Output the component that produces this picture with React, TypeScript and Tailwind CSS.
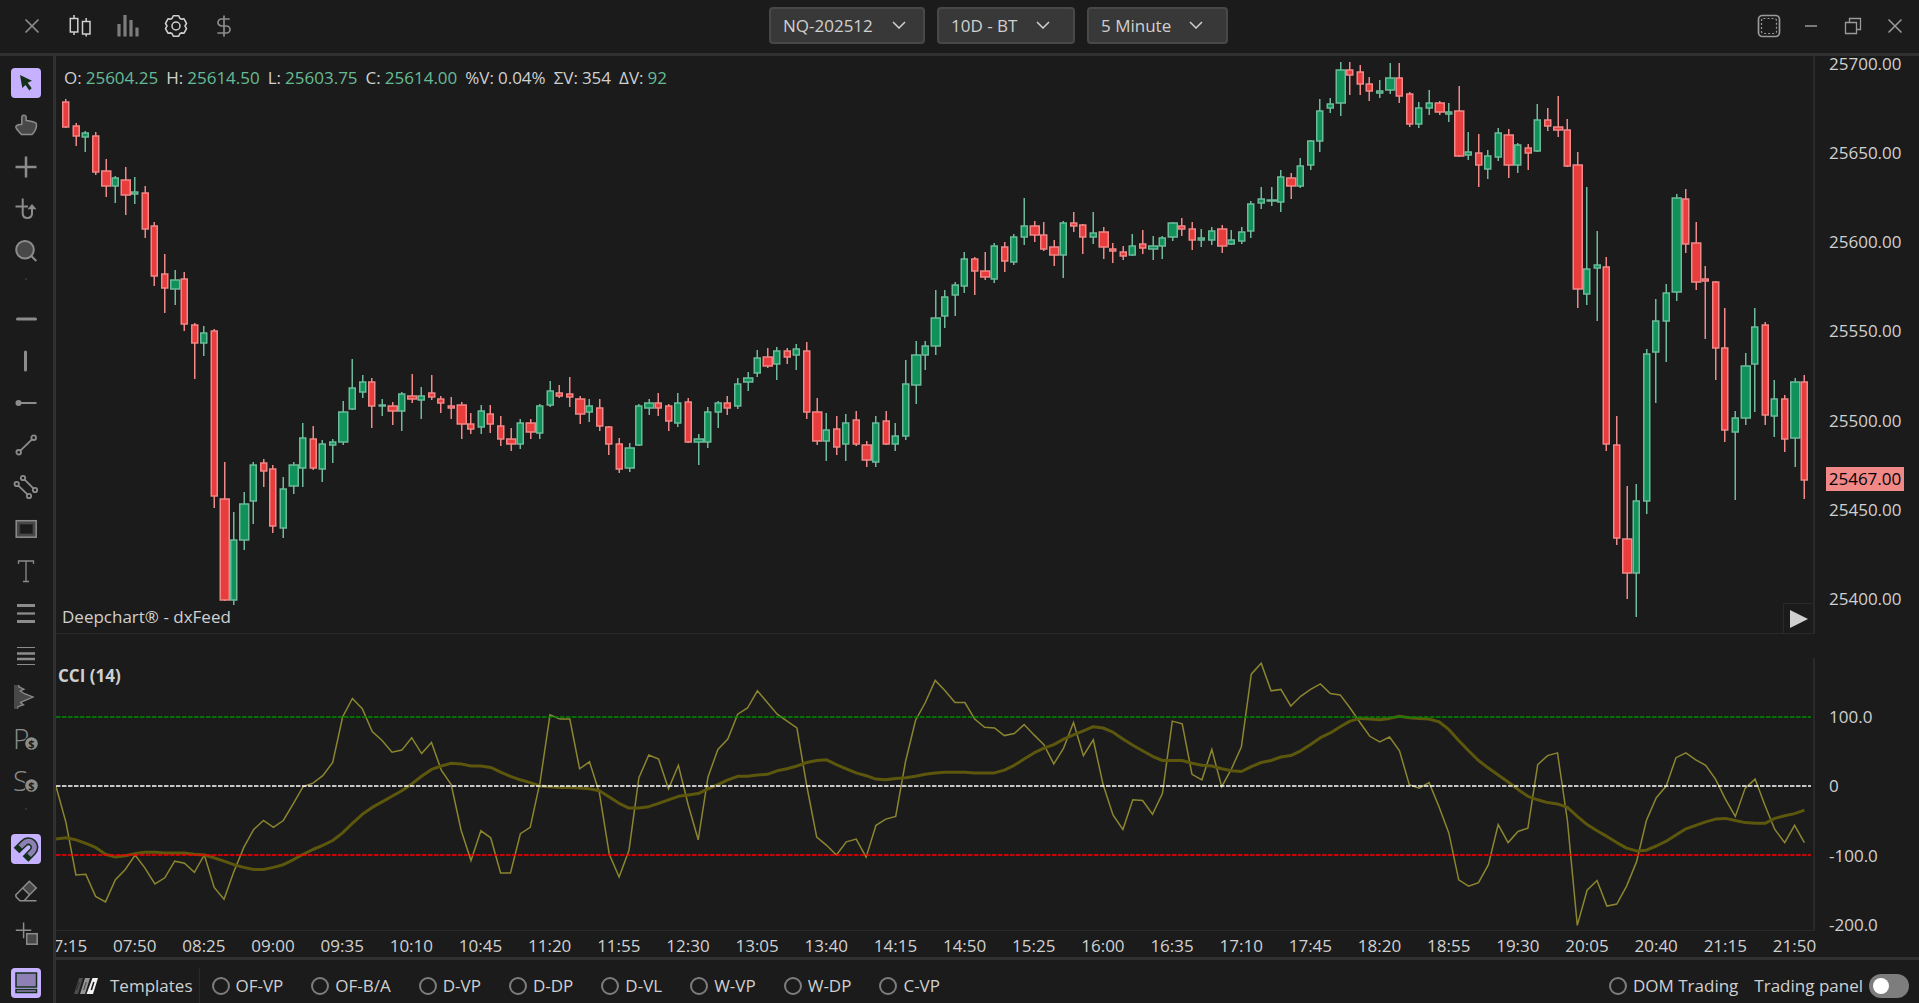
import type { ReactNode } from 'react'
import clsx from 'clsx'
import { DollarSign } from 'lucide-react'

// 1 = up, 0 = down, followed by high, body top, body bottom and low inside the price pane
type Candle = [number, number, number, number, number]

const CANDLES: Candle[] = [
  [0, 43, 45, 72, 72], [0, 67, 69, 81, 90], [1, 75, 76, 82, 96], [0, 76, 79, 117, 119], [0, 103, 114, 131, 141],
  [1, 120, 121, 131, 147], [0, 111, 123, 140, 159], [1, 121, 135, 139, 148], [0, 130, 136, 174, 182], [0, 166, 169, 221, 230],
  [0, 198, 217, 233, 257], [1, 214, 223, 234, 249], [0, 216, 222, 269, 275], [0, 267, 268, 288, 323], [1, 270, 276, 288, 300],
  [0, 273, 274, 441, 452], [0, 406, 442, 545, 545], [1, 456, 483, 545, 549], [1, 436, 447, 485, 494], [1, 406, 408, 446, 468],
  [0, 403, 406, 416, 431], [0, 409, 412, 471, 477], [1, 421, 432, 473, 482], [1, 406, 408, 431, 438], [1, 367, 381, 413, 431],
  [0, 370, 382, 413, 414], [1, 384, 387, 414, 426], [1, 383, 385, 390, 407], [1, 345, 355, 387, 389], [1, 303, 331, 354, 354],
  [1, 319, 325, 337, 342], [0, 322, 325, 351, 372], [1, 343, 348, 351, 360], [0, 346, 349, 356, 369], [1, 336, 337, 356, 375],
  [0, 318, 339, 344, 347], [1, 331, 339, 345, 363], [0, 319, 336, 342, 344], [0, 340, 342, 348, 357], [0, 341, 349, 353, 363],
  [0, 346, 348, 369, 383], [0, 357, 367, 374, 378], [1, 349, 354, 372, 378], [0, 349, 357, 369, 377], [0, 360, 369, 384, 390],
  [0, 372, 382, 389, 395], [1, 363, 366, 389, 393], [0, 363, 366, 377, 383], [1, 348, 349, 378, 383], [1, 325, 334, 350, 351],
  [0, 329, 336, 341, 342], [0, 321, 337, 342, 351], [0, 340, 342, 359, 368], [1, 343, 349, 357, 366], [0, 343, 351, 371, 375],
  [0, 370, 370, 389, 399], [0, 382, 387, 414, 417], [1, 387, 391, 413, 416], [1, 348, 349, 390, 390], [1, 343, 346, 353, 359],
  [0, 337, 346, 353, 360], [0, 348, 349, 366, 375], [1, 337, 346, 368, 371], [0, 342, 345, 387, 387], [1, 378, 382, 387, 409],
  [1, 351, 355, 387, 392], [1, 345, 346, 357, 372], [0, 340, 346, 353, 359], [1, 322, 327, 351, 353], [1, 316, 321, 327, 335],
  [1, 294, 301, 318, 321], [0, 292, 300, 311, 312], [1, 291, 294, 309, 324], [0, 292, 294, 302, 308], [1, 288, 292, 300, 314],
  [0, 286, 294, 357, 363], [0, 342, 355, 386, 389], [1, 357, 373, 386, 405], [0, 360, 372, 392, 399], [1, 358, 366, 389, 405],
  [0, 355, 363, 389, 390], [0, 385, 388, 405, 411], [1, 360, 366, 407, 411], [0, 355, 364, 389, 389], [1, 367, 379, 389, 395],
  [1, 304, 327, 381, 384], [1, 285, 298, 330, 348], [1, 285, 289, 300, 314], [1, 234, 261, 291, 299], [1, 234, 240, 261, 272],
  [1, 226, 228, 240, 260], [1, 196, 202, 231, 237], [0, 201, 202, 216, 239], [0, 196, 214, 222, 224], [1, 187, 189, 224, 227],
  [0, 186, 190, 206, 216], [1, 178, 180, 207, 209], [1, 142, 169, 182, 189], [0, 165, 169, 180, 186], [0, 166, 178, 194, 195],
  [0, 184, 190, 200, 210], [1, 165, 166, 200, 222], [0, 156, 166, 171, 176], [0, 168, 168, 182, 198], [1, 156, 176, 182, 188],
  [0, 171, 175, 192, 203], [0, 187, 192, 196, 207], [0, 190, 195, 201, 204], [1, 178, 189, 200, 200], [0, 174, 187, 193, 198],
  [1, 180, 189, 194, 204], [1, 180, 181, 191, 203], [1, 166, 166, 182, 185], [0, 162, 169, 174, 180], [0, 166, 172, 185, 194],
  [1, 173, 181, 185, 191], [1, 171, 174, 185, 189], [0, 169, 172, 191, 197], [1, 174, 183, 189, 189], [1, 171, 175, 186, 188],
  [1, 145, 147, 176, 182], [1, 131, 142, 148, 153], [1, 131, 143, 146, 150], [1, 114, 120, 147, 156], [0, 117, 121, 131, 143],
  [1, 102, 109, 131, 132], [1, 84, 84, 110, 114], [1, 43, 54, 86, 96], [1, 42, 47, 53, 57], [1, 6, 13, 48, 60],
  [0, 6, 13, 20, 39], [0, 9, 15, 29, 39], [0, 21, 27, 36, 45], [1, 24, 34, 38, 42], [1, 7, 21, 35, 38],
  [0, 7, 21, 41, 47], [0, 36, 37, 69, 71], [1, 46, 51, 69, 72], [1, 34, 46, 53, 59], [0, 45, 46, 57, 59],
  [1, 47, 55, 59, 66], [0, 30, 54, 101, 101], [1, 76, 95, 100, 104], [0, 78, 96, 110, 131], [1, 94, 99, 114, 123],
  [1, 72, 76, 102, 105], [0, 73, 78, 110, 122], [1, 87, 88, 110, 117], [0, 88, 91, 98, 114], [1, 48, 63, 96, 96],
  [0, 52, 63, 71, 75], [0, 40, 70, 75, 81], [0, 63, 73, 111, 111], [0, 96, 108, 234, 252], [1, 131, 212, 239, 249],
  [1, 175, 208, 213, 265], [0, 201, 210, 389, 395], [0, 360, 388, 483, 489], [0, 430, 482, 518, 543], [1, 428, 444, 518, 561],
  [1, 293, 297, 446, 458], [1, 243, 264, 297, 347], [1, 228, 236, 266, 306], [1, 138, 141, 237, 245], [0, 133, 142, 189, 197],
  [0, 166, 186, 227, 234], [0, 210, 222, 226, 283], [0, 225, 225, 293, 324], [0, 252, 291, 375, 386], [1, 355, 361, 377, 444],
  [1, 297, 309, 363, 369], [1, 252, 270, 309, 356], [0, 266, 268, 360, 369], [1, 324, 342, 361, 381], [0, 339, 342, 384, 396],
  [1, 322, 325, 383, 411], [0, 319, 325, 425, 443],
]

// Both series start one bar before the first visible candle
const CCI = [
  -1, -53, -129, -128, -160, -168, -136, -121, -100, -119, -142, -133, -109, -112, -125, -100, -147, -164, -124, -89,
  -63, -50, -60, -50, -26, -1, 4, 15, 34, 100, 127, 112, 79, 66, 49, 52, 70, 47, 63, 23,
  2, -64, -108, -65, -75, -126, -126, -69, -60, 6, 103, 97, 97, 25, 35, -10, -99, -132, -93, 12,
  45, 39, -4, 30, -28, -78, 13, 53, 68, 104, 113, 138, 121, 104, 94, 84, 0, -74, -86, -100,
  -81, -77, -103, -57, -48, -44, 36, 95, 121, 153, 138, 121, 121, 97, 85, 84, 73, 76, 89, 74,
  60, 32, 55, 92, 44, 67, 2, -42, -63, -20, -21, -41, -11, 94, 90, 17, 9, 53, -1, 25,
  57, 162, 178, 138, 140, 116, 130, 140, 148, 134, 132, 113, 92, 72, 64, 71, 51, 2, -3, 5,
  -30, -68, -136, -145, -140, -114, -56, -82, -66, -61, 31, 44, 48, -50, -202, -151, -137, -174, -171, -145,
  -110, -50, -17, 0, 41, 48, 38, 30, 10, -19, -44, -3, 10, -28, -63, -82, -57, -82,
]

const CCI_AVERAGE = [
  -77, -75, -78, -83, -89, -99, -103, -101, -98, -96, -96, -97, -97, -97, -99, -100, -104, -109, -114, -118,
  -121, -121, -118, -114, -107, -99, -92, -86, -79, -68, -54, -41, -31, -23, -15, -7, 3, 14, 24, 29,
  33, 32, 29, 29, 27, 20, 14, 9, 5, 0, -1, -2, -2, -3, -4, -7, -16, -25, -32, -32,
  -30, -25, -20, -15, -13, -11, -4, 2, 9, 14, 14, 16, 17, 22, 25, 29, 34, 37, 38, 31,
  25, 19, 15, 10, 9, 11, 12, 14, 17, 19, 20, 20, 20, 19, 19, 19, 23, 30, 39, 48,
  55, 60, 68, 74, 80, 86, 84, 78, 68, 59, 51, 43, 37, 37, 37, 33, 30, 29, 25, 22,
  21, 28, 34, 37, 42, 44, 51, 60, 70, 77, 86, 94, 98, 97, 96, 98, 101, 99, 98, 97,
  93, 82, 66, 51, 37, 26, 16, 6, -5, -15, -20, -24, -26, -31, -44, -56, -65, -73, -82, -90,
  -94, -93, -87, -80, -71, -62, -57, -52, -48, -47, -50, -53, -54, -54, -47, -43, -40, -35,
]

const PRICES = ['25700.00', '25650.00', '25600.00', '25550.00', '25500.00', '25450.00', '25400.00']

const TIMES = [
  '07:15', '07:50', '08:25', '09:00', '09:35', '10:10', '10:45', '11:20', '11:55', '12:30', '13:05', '13:40', '14:15',
  '14:50', '15:25', '16:00', '16:35', '17:10', '17:45', '18:20', '18:55', '19:30', '20:05', '20:40', '21:15', '21:50',
]

const QUOTE = [
  { label: 'O:', value: '25604.25', up: true },
  { label: 'H:', value: '25614.50', up: true },
  { label: 'L:', value: '25603.75', up: true },
  { label: 'C:', value: '25614.00', up: true },
  { label: '%V:', value: '0.04%', up: false },
  { label: 'ΣV:', value: '354', up: false },
  { label: 'ΔV:', value: '92', up: true },
]

const TEMPLATES = ['OF-VP', 'OF-B/A', 'D-VP', 'D-DP', 'D-VL', 'W-VP', 'W-DP', 'C-VP']

const PANE_W = 1757
const PRICE_H = 577
const CCI_H = 296
const BAR = 6.585
const UNIT = 1.5

const cciY = (value: number) => 152 - value * 0.69
const toPoints = (series: number[]) =>
  series.map((v, i) => `${((i - 1) * 9.8775 + 10).toFixed(1)},${cciY(v).toFixed(1)}`).join(' ')

/* ---------- charts ---------- */

const PriceChart = () => (
  <svg viewBox={`0 0 ${PANE_W} ${PRICE_H}`} preserveAspectRatio="none" className="block h-full w-full" aria-label="Price chart">
    {CANDLES.map(([up, high, top, bottom, low], i) => {
      const pos = 44.2 + i * BAR
      const frac = pos % 1
      const x = Math.round(pos) * UNIT - 56.25
      const half = (frac >= 0.5 && frac < 0.75 ? 3 : 2) * UNIT
      return (
        <g key={i} stroke={up ? '#6dba9a' : '#f08888'} strokeWidth={1.5}>
          <path d={`M${x} ${high}V${low}`} />
          <rect
            x={x - half}
            y={top + 1}
            width={half * 2}
            height={Math.max(bottom - top - 2, 1)}
            fill={up ? '#109159' : '#e93c3c'}
          />
        </g>
      )
    })}
  </svg>
)

const CciChart = () => (
  <svg viewBox={`0 0 ${PANE_W} ${CCI_H}`} preserveAspectRatio="none" className="block h-full w-full" fill="none" aria-label="CCI chart">
    <polyline points={toPoints(CCI)} stroke="#8b8530" strokeWidth={1.5} />
    <polyline points={toPoints(CCI_AVERAGE)} stroke="#5c570d" strokeWidth={3} strokeLinejoin="round" />
    <g strokeWidth={1.5} strokeDasharray="4.5 1.5">
      <path d={`M0 ${cciY(100)}H${PANE_W - 2}`} stroke="#008c00" />
      <path d={`M0 ${cciY(0)}H${PANE_W - 2}`} stroke="#ffffff" />
      <path d={`M0 ${cciY(-100)}H${PANE_W - 2}`} stroke="#ff0000" />
    </g>
  </svg>
)

/* ---------- icons ---------- */

const Icon = ({ children, className }: { children: ReactNode; className?: string }) => (
  <svg
    viewBox="0 0 24 24"
    className={clsx('size-6 shrink-0 overflow-visible', className)}
    fill="none"
    stroke="currentColor"
    strokeWidth={1.5}
    aria-hidden="true"
  >
    {children}
  </svg>
)

const MoneyLetter = ({ letter }: { letter: string }) => (
  <>
    <text x="-1" y="22" fontSize="28" fontWeight="300" fill="currentColor" stroke="none">{letter}</text>
    <circle cx="17.5" cy="16.5" r="7.3" fill="#1b1b1b" stroke="none" />
    <circle cx="17.5" cy="16.5" r="6.3" fill="currentColor" stroke="none" />
    <text x="17.5" y="20.5" textAnchor="middle" fontSize="11" fontWeight="700" fill="#1b1b1b" stroke="none">$</text>
  </>
)

interface Tool {
  name: string
  active?: boolean
  icon: ReactNode
}

const POINTER_TOOLS: Tool[] = [
  {
    name: 'Select',
    active: true,
    icon: <path d="M6 4 18 9.7l-4.3 2 4 5.6-2.4 2.2-3.8-5.4L8.3 17z" fill="currentColor" stroke="none" />,
  },
  {
    name: 'Pan',
    icon: <path d="M7.8 11.2V4.4a2.2 2.2 0 0 1 4.4 0v3c3.4.5 6.8 1 9.3 2.3.9.5 1 1.3 1 2.3 0 4-2 7-4.5 9.6H7.5C6 19.5 3.5 18 2 14.6c-.4-1 .3-2 1.3-2.4 1.5-.5 3-.6 4.5-1z" fill="#484848" />,
  },
  { name: 'Crosshair', icon: <path d="M12 1.5v21M1.5 12h21" strokeWidth={2.5} /> },
  {
    name: 'Replay',
    icon: (
      <>
        <path d="M1.5 9.5H14M8.7 1.5V17A4.7 4.7 0 0 0 18 17v-6" strokeWidth={2} />
        <path d="M13.5 12.3 18 7l4.5 5.3z" fill="currentColor" stroke="none" />
      </>
    ),
  },
  {
    name: 'Zoom',
    icon: (
      <>
        <circle cx="11" cy="10.7" r="8.8" fill="#484848" strokeWidth={2} />
        <path d="m17.3 17 5 5" strokeWidth={2} />
      </>
    ),
  },
]

const DRAW_TOOLS: Tool[] = [
  { name: 'Horizontal line', icon: <path d="M3.5 12h18" strokeWidth={3} strokeLinecap="round" /> },
  { name: 'Vertical line', icon: <path d="M11.5 3v18" strokeWidth={3} strokeLinecap="round" /> },
  {
    name: 'Ray',
    icon: (
      <>
        <circle cx="4.5" cy="12" r="3" fill="currentColor" stroke="none" />
        <path d="M5 12h17.5" strokeWidth={2} />
      </>
    ),
  },
  {
    name: 'Trend line',
    icon: (
      <>
        <circle cx="4.7" cy="19.3" r="2.3" strokeWidth={1.8} />
        <circle cx="19.7" cy="4.7" r="2.3" strokeWidth={1.8} />
        <path d="M6.4 17.7 18 6.3" strokeWidth={1.8} />
      </>
    ),
  },
  {
    name: 'Channel',
    icon: (
      <g strokeWidth={1.8}>
        <circle cx="9" cy="3" r="2.2" />
        <circle cx="21" cy="15" r="2.2" />
        <circle cx="2.7" cy="9" r="2.2" />
        <circle cx="15" cy="21" r="2.2" />
        <path d="m10.6 4.600 8.800 8.800M4.300 10.600l9.100 8.800" />
      </g>
    ),
  },
  {
    name: 'Rectangle',
    icon: (
      <>
        <rect x="2.2" y="3.7" width="20" height="16.500" fill="#484848" />
        <rect x="6" y="7.5" width="12.5" height="9" fill="#1b1b1b" stroke="#2a2a2a" strokeWidth={1} />
      </>
    ),
  },
  {
    name: 'Text',
    icon: <path d="M4.5 5V2h15v3M12 2v20.500M9 22.500h6" strokeWidth={1.3} />,
  },
  {
    name: 'Retracement',
    icon: (
      <>
        <path d="M3 4.500h18M3 20.500h18" strokeWidth={3} />
        <path d="M3 12.500h18" strokeWidth={2.3} />
      </>
    ),
  },
  {
    name: 'Extension',
    icon: (
      <>
        <path d="M3 4.500h18M3 21.500h18" strokeWidth={1} />
        <path d="M3 10.500h18M3 16h18" strokeWidth={2.500} />
      </>
    ),
  },
  {
    name: 'Volume profile',
    icon: (
      <>
        <path d="M0 0h5l5 4.200L6.300 6l4.200 2.700 8.500 3.300-12.500 5.500 3 2.200-5.500 2-.500 2.300H0z" fill="#484848" stroke="none" />
        <path d="M4.500.3 5 2l5 2.200L6.300 6l4.200 2.700 8.500 3.300-12.500 5.500 3 2.200-5.500 2-.500 1.800" strokeWidth={1.300} />
      </>
    ),
  },
  { name: 'Position P&L', icon: <MoneyLetter letter="P" /> },
  { name: 'Session P&L', icon: <MoneyLetter letter="S" /> },
]

const EDIT_TOOLS: Tool[] = [
  {
    name: 'Magnet',
    active: true,
    icon: (
      <>
        <path d="M2.500 13.500 10 6.200a6 6 0 0 1 8.800 8.300L11.500 22" strokeWidth={8} />
        <path d="M6.300 9.800 10 6.200a6 6 0 0 1 8.800 8.300l-3.700 3.800" stroke="#8e7fb5" strokeWidth={5} />
      </>
    ),
  },
  {
    name: 'Eraser',
    icon: (
      <>
        <path d="M8.700 9 15.300 2.200 22.300 9l-6.700 6.700z" fill="#484848" />
        <path d="M8.700 9 1.700 16l.500 2L6 21.700h4.200l5.400-6M10 21.700h12.500" />
      </>
    ),
  },
  {
    name: 'Clone',
    icon: (
      <>
        <path d="M1.800 9.300h15.500M9.600 1.500v15.800" />
        <rect x="12.700" y="12.700" width="10.500" height="10.500" fill="#484848" />
      </>
    ),
  },
]

const PANEL_TOOL: Tool = {
  name: 'Bottom panel',
  active: true,
  icon: (
    <>
      <rect x="2" y="2" width="20.500" height="14" fill="#8e7fb5" />
      <rect x="2" y="18.500" width="20.500" height="3" fill="#8e7fb5" />
    </>
  ),
}

const CandlesIcon = () => (
  <Icon className="text-[#d0d0d0]">
    <path d="M2.300 4.500h7.500V18H2.300zM6 1v3.500M6 18v3M14.500 7.500H22V20h-7.500zM18.200 4v3.500M18.200 20v2.500" />
  </Icon>
)

const BarsIcon = () => (
  <Icon className="text-[#7d7d7d]">
    <path d="M3 10v12.500M9 1v21.500M15 6v16.500M21 13.500v9" strokeWidth={3.200} />
  </Icon>
)

const GearIcon = () => (
  <Icon className="text-[#d0d0d0]">
    <path
      d="M9.300 1.800h5.400l1.100 2.500 1.400.8 2.800-.3 2.500 4.600-1.500 2.600 1.500 2.600-2.500 4.600-2.800-.3-1.400.8-1.100 2.500H9.300l-1.100-2.500-1.400-.8-2.800.3-2.500-4.600L3 12 1.500 9.400 4 4.800l2.800.3 1.400-.8z"
      strokeWidth={1.600}
      strokeLinejoin="round"
    />
    <circle cx="12" cy="12" r="4" />
  </Icon>
)

const LogoMark = () => (
  <svg viewBox="0 0 24 16" className="h-4 w-6" aria-hidden="true">
    <path d="M5 0h4L4 16H0z" fill="#4c4c4c" />
    <path d="M11 0h5l-5 16H6z" fill="#949494" />
    <path d="M18.500 0H24l-5 16h-6.500z" fill="#f2f2f2" />
    <path d="m19.800 4-2.500 8" stroke="#1b1b1b" strokeWidth={1.500} />
    <path d="m12.200 4-2.500 8M5 4l-2.500 8" stroke="#1b1b1b" strokeWidth={0.700} />
  </svg>
)

/* ---------- layout ---------- */

const ToolButton = ({ tool }: { tool: Tool }) => (
  <div className="flex h-[42px] shrink-0 items-center">
    <button
      type="button"
      aria-label={tool.name}
      className={clsx(
        'flex size-[30px] items-center justify-center rounded',
        tool.active ? 'bg-[#c5b1ff] text-[#14301a]' : 'text-[#8c8c8c]',
      )}
    >
      <Icon>{tool.icon}</Icon>
    </button>
  </div>
)

const ToolDivider = () => (
  <div className="flex h-[26px] shrink-0 justify-center pt-1.5">
    <span className="size-0.5 bg-[#333]" />
  </div>
)

const Sidebar = () => (
  <aside className="flex w-14 shrink-0 flex-col items-center border-r-3 border-[#303030] pt-1.5 pr-0.5">
    {POINTER_TOOLS.map((tool) => <ToolButton key={tool.name} tool={tool} />)}
    <ToolDivider />
    {DRAW_TOOLS.map((tool) => <ToolButton key={tool.name} tool={tool} />)}
    <ToolDivider />
    {EDIT_TOOLS.map((tool) => <ToolButton key={tool.name} tool={tool} />)}
    <div className="mt-2">
      <ToolButton tool={PANEL_TOOL} />
    </div>
  </aside>
)

const Picker = ({ label, value, className, chevron }: { label: string; value: string; className: string; chevron: string }) => (
  <div className={clsx('relative', className)}>
    <select
      aria-label={label}
      defaultValue={value}
      className="h-[37px] w-full appearance-none rounded border-2 border-[#484848] bg-[#383838] px-3 text-[#d0d0d0] outline-none"
    >
      <option>{value}</option>
    </select>
    <svg viewBox="0 0 14 8" className={clsx('pointer-events-none absolute top-3.5 h-2 w-3.5', chevron)} fill="none" aria-hidden="true">
      <path d="m1 1 6 6 6-6" stroke="#d0d0d0" strokeWidth={1.500} />
    </svg>
  </div>
)

const TopBar = () => (
  <header className="grid h-14 shrink-0 grid-cols-[1fr_auto_1fr] border-b-3 border-[#303030]">
    <div className="flex items-center pb-px pl-2">
      <button type="button" aria-label="Close menu" className="flex w-12 justify-center text-[#8c8c8c]">
        <Icon><path d="m5.500 5.500 13 13m0-13-13 13" strokeWidth={1.700} /></Icon>
      </button>
      <button type="button" aria-label="Chart type" className="flex w-12 justify-center"><CandlesIcon /></button>
      <button type="button" aria-label="Indicators" className="flex w-12 justify-center"><BarsIcon /></button>
      <button type="button" aria-label="Settings" className="flex w-12 justify-center"><GearIcon /></button>
      <button type="button" aria-label="Trading" className="flex w-12 justify-center text-[#8c8c8c]">
        <DollarSign size={24} strokeWidth={1.700} />
      </button>
    </div>
    <div className="flex items-center gap-3 pb-0.5 pl-[78px]">
      <Picker label="Symbol" value="NQ-202512" className="w-39" chevron="right-[19px]" />
      <Picker label="Range" value="10D - BT" className="w-[138px]" chevron="right-[25px]" />
      <Picker label="Interval" value="5 Minute" className="w-[141px]" chevron="right-[25px]" />
    </div>
    <div className="flex items-center justify-end gap-[18px] pr-3 pb-px text-[#9a9a9a]">
      <button type="button" aria-label="Snapshot">
        <Icon>
          <rect x="1.500" y="1.500" width="21" height="21" rx="4" strokeWidth={1.700} />
          <rect x="4.500" y="4.500" width="15" height="15" rx="2" strokeDasharray="2 2" strokeWidth={1.200} />
        </Icon>
      </button>
      <button type="button" aria-label="Minimize"><Icon><path d="M6 12h12" /></Icon></button>
      <button type="button" aria-label="Restore">
        <Icon><path d="M4.500 8.500h11v11h-11zM8.500 8.500v-4h11v11h-4" strokeWidth={1.300} /></Icon>
      </button>
      <button type="button" aria-label="Close"><Icon><path d="m5.500 5.500 13 13m0-13-13 13" /></Icon></button>
    </div>
  </header>
)

const ChartArea = () => (
  <main className="grid min-h-0 flex-1 grid-cols-[minmax(0,1fr)_104px] grid-rows-[minmax(0,578fr)_minmax(0,297fr)_26px]">
    <section className="relative border-r-2 border-b border-[#292929]">
      <PriceChart />
      <dl className="absolute top-3 left-2 flex gap-2 leading-5">
        {QUOTE.map(({ label, value, up }) => (
          <div key={label} className="flex gap-1">
            <dt>{label}</dt>
            <dd className={up ? 'text-[#66bb96]' : ''}>{value}</dd>
          </div>
        ))}
      </dl>
      <p className="absolute bottom-1.5 left-1.5 leading-5">Deepchart® - dxFeed</p>
      <button
        type="button"
        aria-label="Go to latest bar"
        className="absolute right-0 bottom-0 flex size-[30px] items-center justify-center border-t border-l border-[#292929]"
      >
        <svg viewBox="0 0 18 18" className="size-[18px]" aria-hidden="true"><path d="M0 0 18 9 0 18z" fill="#d0d0d0" /></svg>
      </button>
    </section>
    <div className="relative">
      <ul className="flex h-full flex-col justify-between pb-[27px] pl-3.5 leading-4">
        {PRICES.map((price) => <li key={price}>{price}</li>)}
      </ul>
      <span
        className="absolute left-[11px] h-6 w-[78px] bg-[#f08888] text-center leading-6 text-black"
        style={{ top: `${(411 / 578) * 100}%` }}
      >
        25467.00
      </span>
    </div>

    <section className="relative border-b border-[#292929] pr-0.5">
      <CciChart />
      <h2 className="absolute top-8 left-0.5 leading-5 font-bold">CCI (14)</h2>
      <span className="absolute top-6 right-0 bottom-0 w-0.5 bg-[#292929]" />
    </section>
    <ul className="-mb-0.5 flex flex-col justify-between pt-[75px] pl-3.5 leading-4">
      <li>100.0</li>
      <li>0</li>
      <li>-100.0</li>
      <li>-200.0</li>
    </ul>

    <div className="col-span-2 overflow-hidden">
      <ul className="mr-[90px] -ml-[25px] flex pt-[3px] leading-6">
        {TIMES.map((time) => <li key={time} className="min-w-0 flex-1 text-center">{time}</li>)}
      </ul>
    </div>
  </main>
)

const Option = ({ label, name }: { label: string; name: string }) => (
  <label className="flex items-center gap-1.5 whitespace-nowrap">
    <input type="radio" name={name} className="size-[18px] appearance-none rounded-full border-2 border-[#7d7d7d]" />
    {label}
  </label>
)

const BottomBar = () => (
  <footer className="flex h-[46px] shrink-0 items-center border-t-3 border-[#303030] pt-2">
    <button type="button" className="flex h-full items-center gap-3 border-r border-[#292929] pr-1.5 pl-[18px]">
      <LogoMark />
      Templates
    </button>
    <div className="flex gap-7 pl-3">
      {TEMPLATES.map((label) => <Option key={label} label={label} name="template" />)}
    </div>
    <div className="ml-auto flex items-center gap-4 pr-2.5">
      <Option label="DOM Trading" name="dom" />
      <label className="flex items-center gap-1.5">
        Trading panel
        <input
          type="checkbox"
          role="switch"
          className="h-6 w-10 appearance-none rounded-full bg-[#7d7d7d] p-1 before:block before:size-4 before:rounded-full before:bg-white"
        />
      </label>
    </div>
  </footer>
)

const App = () => (
  <div className="flex h-screen flex-col overflow-hidden bg-[#1b1b1b] font-['Open_Sans','Noto_Sans',sans-serif] text-[17px] text-[#d0d0d0]">
    <TopBar />
    <div className="flex min-h-0 flex-1">
      <Sidebar />
      <div className="flex min-w-0 flex-1 flex-col">
        <ChartArea />
        <BottomBar />
      </div>
    </div>
  </div>
)

export default App
